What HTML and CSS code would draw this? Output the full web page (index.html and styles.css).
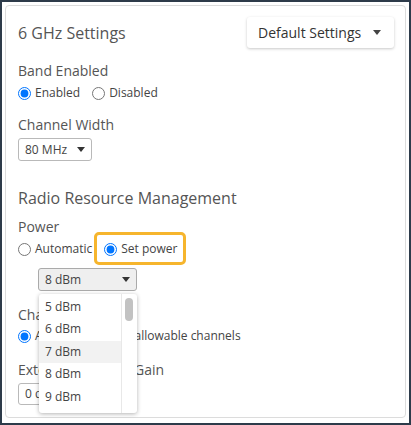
FILE: index.html
```html
<!DOCTYPE html>
<html>
<head>
<meta charset="utf-8">
<link rel="stylesheet" href="styles.css">
</head>
<body>
<div class="frame">
  <div class="card">
    <div class="header">
      <div class="title">6 GHz Settings</div>
      <div class="btn">Default Settings <span class="caret"></span></div>
    </div>

    <div class="label first">Band Enabled</div>
    <div class="radios">
      <label class="radio"><input type="radio" name="band" checked> Enabled</label>
      <label class="radio"><input type="radio" name="band"> Disabled</label>
    </div>

    <div class="label l2">Channel Width</div>
    <div class="select w80">80 MHz <span class="caret"></span></div>

    <div class="section">Radio Resource Management</div>

    <div class="label l3">Power</div>
    <div class="radios">
      <label class="radio"><input type="radio" name="power"> Automatic</label>
      <label class="radio hl"><input type="radio" name="power" checked> Set power</label>
    </div>

    <div class="power-wrap">
      <div class="select gray">8 dBm <span class="caret"></span></div>
      <div class="list">
        <div class="opts">
          <div class="opt">5 dBm</div>
          <div class="opt">6 dBm</div>
          <div class="opt active">7 dBm</div>
          <div class="opt">8 dBm</div>
          <div class="opt">9 dBm</div>
        </div>
        <div class="scroll"><div class="thumb"></div></div>
      </div>
    </div>

    <div class="label l4">Channels</div>
    <div class="radios r2">
      <label class="radio"><input type="radio" name="chan" checked> Automatic across allowable channels</label>
    </div>

    <div class="label l4">External Antenna Gain</div>
    <div class="input">0 dBi</div>
  </div>
</div>
</body>
</html>
```

FILE: styles.css
```css
html, body {
  margin: 0;
  padding: 0;
}
body {
  background: #2d3b4a;
  width: 411px;
  height: 425px;
  overflow: hidden;
  font-family: "Open Sans", "Noto Sans", sans-serif;
  color: #4d4d4d;
}
.frame {
  margin: 2px;
  height: 421px;
  background: #fff;
  padding: 3px;
  box-sizing: border-box;
}
.card {
  height: 413px;
  box-sizing: border-box;
  border: 1px solid #dcdcdc;
  border-radius: 4px;
  padding: 11px 11px 0 12px;
}
.header {
  display: flex;
  justify-content: space-between;
  align-items: center;
  height: 31px;
}
.title {
  font-size: 16px;
  color: #555;
}
.btn {
  height: 31px;
  width: 147px;
  box-sizing: border-box;
  display: flex;
  align-items: center;
  padding-left: 11px;
  font-size: 14px;
  color: #333;
  background: #fff;
  border-radius: 3px;
  box-shadow: 0 1px 3px rgba(0,0,0,0.22);
}
.btn .caret {
  margin-left: auto;
  margin-right: 13px;
  border-left: 4px solid transparent;
  border-right: 4px solid transparent;
  border-top: 5px solid #444;
}
.label {
  font-size: 14px;
  line-height: 20px;
  color: #555;
}
.label.first { margin-top: 13px; }
.label.l2 { margin-top: 12px; }
.label.l3 { margin-top: 7px; }
.label.l4 { margin-top: 14px; }
.radios {
  display: flex;
  gap: 12px;
  margin-top: 2px;
  font-size: 12px;
  line-height: 20px;
  color: #444;
}
.radios.r2 { margin-top: 1px; }
.radio {
  display: flex;
  align-items: center;
  gap: 4px;
  position: relative;
}
.radio input {
  margin: 0;
  width: 13px;
  height: 13px;
}
.radio.hl::after {
  content: "";
  position: absolute;
  top: -7px;
  bottom: -6px;
  left: -10px;
  right: -8px;
  border: 3px solid #f6b52d;
  border-radius: 5px;
}
.select {
  margin-top: 3px;
  height: 23px;
  box-sizing: border-box;
  border: 1px solid #b9b9b9;
  border-radius: 3px;
  display: flex;
  align-items: center;
  justify-content: space-between;
  padding: 0 6px 0 6px;
  font-size: 12px;
  color: #444;
  background: #fff;
}
.select.w80 { width: 74px; }
.select .caret {
  border-left: 4px solid transparent;
  border-right: 4px solid transparent;
  border-top: 5px solid #333;
}
.section {
  margin-top: 25px;
  font-size: 16px;
  line-height: 24px;
  color: #555;
}
.power-wrap {
  position: relative;
  margin-top: 9px;
  margin-left: 20px;
  width: 99px;
}
.select.gray {
  margin-top: 0;
  background: #efefef;
  border-color: #aaa;
}
.list {
  position: absolute;
  top: 26px;
  left: 1px;
  width: 98px;
  height: 119px;
  background: #fff;
  border-radius: 3px;
  box-shadow: 0 1px 4px rgba(0,0,0,0.3);
  display: flex;
  z-index: 2;
  overflow: hidden;
}
.opts {
  flex: 1;
  padding-top: 1.5px;
  border-right: 1px solid #e8e8e8;
}
.opt {
  height: 22.5px;
  line-height: 22.5px;
  padding-left: 6px;
  font-size: 12px;
  color: #444;
}
.opt.active { background: #f2f2f2; }
.scroll {
  width: 15px;
  position: relative;
}
.thumb {
  position: absolute;
  left: 3px;
  top: 4px;
  width: 8px;
  height: 23px;
  border-radius: 4px;
  background: #c2c2c2;
}
.input {
  margin-top: 3px;
  height: 22px;
  width: 80px;
  box-sizing: border-box;
  border: 1px solid #b9b9b9;
  border-radius: 3px;
  padding-left: 6px;
  font-size: 12px;
  line-height: 20px;
  color: #444;
}
```
